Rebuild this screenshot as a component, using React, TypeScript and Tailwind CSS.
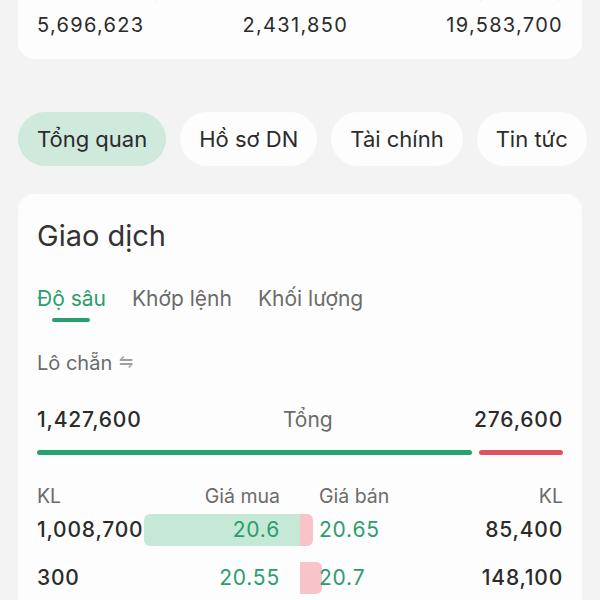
const font = { fontFamily: 'Inter, "Noto Sans", sans-serif' };

const tabs = ['Tổng quan', 'Hồ sơ DN', 'Tài chính', 'Tin tức'];

const rows = [
    { buyVol: '1,008,700', buy: '20.6', buyBar: 156, sell: '20.65', sellBar: 13, sellVol: '85,400' },
    { buyVol: '300', buy: '20.55', buyBar: 0, sell: '20.7', sellBar: 22, sellVol: '148,100' },
];

export default function App() {
    return (
        <div
            className="w-[600px] h-[600px] overflow-hidden bg-[#f3f3f3] px-[18px] text-[#2b2b2b]"
            style={font}
        >
            <div className="-mt-[40px] bg-[#fdfdfd] rounded-b-2xl px-[19px] pt-[12px] pb-[21px]">
                <div className="flex justify-between text-[15px] text-[#777] leading-[40px] h-[40px]">
                    <span>KL mua chủ động</span>
                    <span>KL khác</span>
                    <span>Tổng khối lượng</span>
                </div>
                <div className="flex justify-between text-[20px] leading-[26px] tracking-[1.3px]">
                    <span>5,696,623</span>
                    <span>2,431,850</span>
                    <span>19,583,700</span>
                </div>
            </div>

            <div className="mt-[53px] flex gap-[14px] whitespace-nowrap">
                {tabs.map((t, i) => (
                    <div
                        key={t}
                        className={
                            'h-[54px] shrink-0 rounded-full px-[19px] flex items-center text-[22px] ' +
                            (i === 0 ? 'bg-[#cfe9dd]' : 'bg-[#fdfdfd]')
                        }
                    >
                        {t}
                    </div>
                ))}
            </div>

            <div className="mt-[28px] bg-[#fdfdfd] rounded-2xl px-[19px] pt-[20px] pb-[20px]">
                <div className="h-[44px] flex items-center text-[29px] text-[#333]">Giao dịch</div>

                <div className="mt-[24px] flex gap-[26px] text-[21px] text-[#6b6b6b]">
                    <div className="flex flex-col items-center">
                        <span className="text-[#2a9d6e] leading-[34px]">Độ sâu</span>
                        <span className="mt-[2px] w-[38px] h-[4px] rounded-full bg-[#2a9d6e]" />
                    </div>
                    <span className="leading-[34px]">Khớp lệnh</span>
                    <span className="leading-[34px]">Khối lượng</span>
                </div>

                <div className="mt-[27px] h-[28px] flex items-center gap-[7px] text-[20px] text-[#6b6b6b]">
                    Lô chẵn <span className="text-[17px] text-[#a0a0a0]">⇋</span>
                </div>

                <div className="mt-[28px] h-[30px] flex items-center justify-between text-[21px]">
                    <span className="font-medium tracking-[0.8px]">1,427,600</span>
                    <span className="text-[#6b6b6b]">Tổng</span>
                    <span className="font-medium tracking-[0.8px]">276,600</span>
                </div>

                <div className="mt-[15px] flex gap-[7px]">
                    <div className="h-[5px] w-[435px] rounded-full bg-[#23a36f]" />
                    <div className="h-[5px] flex-1 rounded-full bg-[#e05260]" />
                </div>

                <div className="mt-[27px] h-[28px] grid grid-cols-2 text-[19.5px] text-[#6b6b6b]">
                    <div className="flex justify-between pr-[20px]">
                        <span>KL</span>
                        <span>Giá mua</span>
                    </div>
                    <div className="flex justify-between pl-[19px]">
                        <span>Giá bán</span>
                        <span>KL</span>
                    </div>
                </div>

                <div className="mt-[4px] flex flex-col gap-[16px]">
                    {rows.map((r) => (
                        <div
                            key={r.buyVol}
                            className="h-[32px] grid grid-cols-2 text-[21px] tracking-[0.8px]"
                        >
                            <div className="relative flex items-center justify-between pr-[20px]">
                                {r.buyBar > 0 && (
                                    <div
                                        className="absolute right-0 top-0 bottom-0 rounded-l-md bg-[#c5e8d7]"
                                        style={{ width: r.buyBar }}
                                    />
                                )}
                                <span className="relative font-medium">{r.buyVol}</span>
                                <span className="relative text-[#2a9d6e]">{r.buy}</span>
                            </div>
                            <div className="relative flex items-center justify-between pl-[19px]">
                                <div
                                    className="absolute left-0 top-0 bottom-0 rounded-r-md bg-[#f8c4ca]"
                                    style={{ width: r.sellBar }}
                                />
                                <span className="relative text-[#2a9d6e]">{r.sell}</span>
                                <span className="relative font-medium">{r.sellVol}</span>
                            </div>
                        </div>
                    ))}
                </div>
            </div>
        </div>
    );
}
